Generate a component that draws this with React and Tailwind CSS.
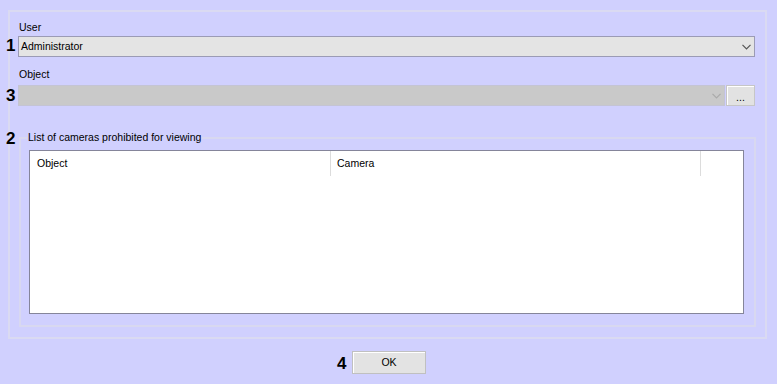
import React from 'react';

function Chevron({ color }) {
  return (
    <svg width="9" height="6" viewBox="0 0 9 6" className="shrink-0">
      <path d="M0.5 0.8 L4.5 4.8 L8.5 0.8" fill="none" stroke={color} strokeWidth="1.2" />
    </svg>
  );
}

function Num({ children, className }) {
  return (
    <span className={`absolute text-[17px] leading-none font-bold text-black ${className}`}>{children}</span>
  );
}

export default function App() {
  return (
    <div
      className="relative w-[777px] h-[384px] bg-[#d0d0fe] overflow-hidden text-[10.5px] text-black"
      style={{ fontFamily: '"Liberation Sans", Arial, sans-serif' }}
    >
      <div className="pt-[10px] pl-[8px]">
        <div className="w-[759px] h-[329px] border-2 border-[#dadaf2] pl-[8px] pr-[10px] flex flex-col">
          <div className="mt-[9px] leading-[13px] pl-[1px]">User</div>
          <div className="mt-[2px] h-[21px] bg-[#e4e4e4] border border-[#9b9bb5] flex items-center pl-[2px] pr-[3px]">
            <span className="flex-1 leading-[13px]">Administrator</span>
            <Chevron color="#555" />
          </div>
          <div className="mt-[11px] leading-[13px] pl-[1px]">Object</div>
          <div className="mt-[4px] flex gap-[1px] h-[21px]">
            <div className="flex-1 bg-[#c9c9c9] border border-[#c4c4d4] flex items-center justify-end pr-[3px]">
              <Chevron color="#aaa" />
            </div>
            <div className="w-[29px] bg-[#e2e2e2] border border-[#c6c6c6] shadow-[inset_1px_1px_0_#fff] flex items-end justify-center pb-[3px] leading-none">
              ...
            </div>
          </div>
          <fieldset className="mt-[25px] ml-[1px] mr-[-1px] h-[196px] border-2 border-[#d8d8f0] pl-[8px] pr-[10px] pb-[10px]">
            <legend className="ml-[-2px] px-[1px] leading-[13px]">List of cameras prohibited for viewing</legend>
            <div className="mt-[6px] h-[164px] bg-white border border-[#85859a]">
              <div className="flex h-[25px] items-center">
                <div className="w-[301px] pl-[7px] h-full flex items-center border-r border-[#dcdcdc]">Object</div>
                <div className="w-[370px] pl-[6px] h-full flex items-center border-r border-[#dcdcdc]">Camera</div>
              </div>
            </div>
          </fieldset>
        </div>
      </div>
      <div className="flex justify-center mt-[12px] pl-[1px]">
        <div className="w-[74px] h-[23px] bg-[#e3e3e3] border border-[#c0c0c0] shadow-[inset_1px_1px_0_#fff] flex items-center justify-center leading-none">
          OK
        </div>
      </div>
      <Num className="left-[6px] top-[37px]">1</Num>
      <Num className="left-[6px] top-[87px]">3</Num>
      <Num className="left-[6px] top-[130px]">2</Num>
      <Num className="left-[337px] top-[355px]">4</Num>
    </div>
  );
}
